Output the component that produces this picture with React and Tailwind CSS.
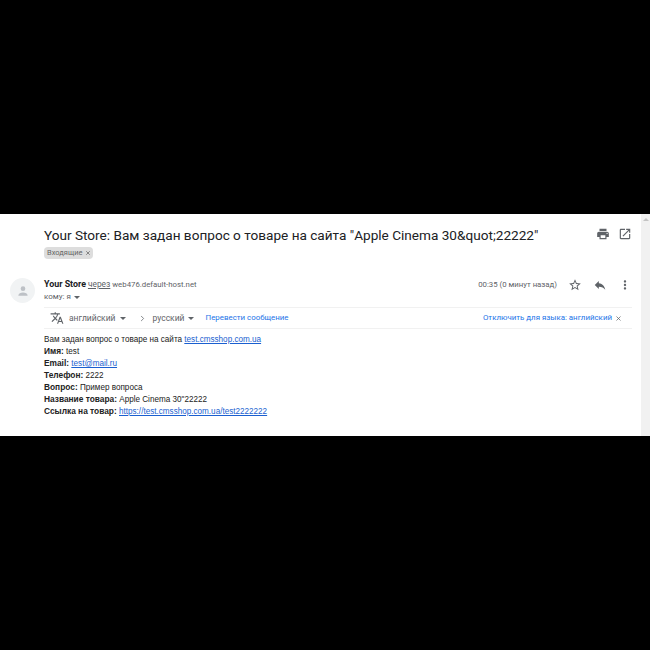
import { ChevronRight, X } from "lucide-react"

function Caret({ className = "" }) {
  return <span className={`inline-block w-0 h-0 border-x-[3px] border-x-transparent border-t-[3px] border-t-[#5f6368] ${className}`} />
}

function Icon({ d, size = "w-[14px] h-[14px]", className = "" }) {
  return (
    <svg viewBox="0 0 24 24" className={`${size} shrink-0 ${className}`} fill="#5f6368">
      <path d={d} />
    </svg>
  )
}

const printPath = "M19 8H5c-1.66 0-3 1.34-3 3v6h4v4h12v-4h4v-6c0-1.66-1.34-3-3-3zm-3 11H8v-5h8v5zm3-7c-.55 0-1-.45-1-1s.45-1 1-1 1 .45 1 1-.45 1-1 1zm-1-9H6v4h12V3z"
const popoutPath = "M19 19H5V5h7V3H5c-1.11 0-2 .9-2 2v14c0 1.1.89 2 2 2h14c1.1 0 2-.9 2-2v-7h-2v7zM14 3v2h3.59l-9.83 9.83 1.41 1.41L19 6.41V10h2V3h-7z"
const starPath = "M22 9.24l-7.19-.62L12 2 9.19 8.63 2 9.24l5.46 4.73L5.82 21 12 17.27 18.18 21l-1.63-7.03L22 9.24zM12 15.4l-3.76 2.27 1-4.28-3.32-2.88 4.38-.38L12 6.1l1.71 4.04 4.38.38-3.32 2.88 1 4.28L12 15.4z"
const replyPath = "M10 9V5l-7 7 7 7v-4.1c5 0 8.5 1.6 11 5.1-1-5-4-10-11-11z"
const morePath = "M12 8c1.1 0 2-.9 2-2s-.9-2-2-2-2 .9-2 2 .9 2 2 2zm0 2c-1.1 0-2 .9-2 2s.9 2 2 2 2-.9 2-2-.9-2-2-2zm0 6c-1.1 0-2 .9-2 2s.9 2 2 2 2-.9 2-2-.9-2-2-2z"
const translatePath = "M12.87 15.07l-2.54-2.51.03-.03c1.74-1.94 2.98-4.17 3.71-6.53H17V4h-7V2H8v2H1v1.99h11.17C11.5 7.92 10.44 9.75 9 11.35 8.07 10.32 7.3 9.19 6.69 8h-2c.73 1.63 1.73 3.17 2.98 4.56l-5.09 5.02L4 19l5-5 3.11 3.11.76-2.04zM18.5 10h-2L12 22h2l1.12-3h4.75L21 22h2l-4.5-12zm-2.62 7l1.62-4.33L19.12 17h-3.24z"

function Avatar() {
  return (
    <div className="w-[25px] h-[25px] rounded-full bg-[#f1f3f4] flex items-center justify-center shrink-0">
      <svg viewBox="0 0 24 24" className="w-[14px] h-[14px]" fill="#bdc1c6">
        <circle cx="12" cy="8" r="4" />
        <path d="M4 20c0-3.5 4-5.5 8-5.5s8 2 8 5.5z" />
      </svg>
    </div>
  )
}

function Link({ children }) {
  return <span className="text-[#1a5fd0] underline">{children}</span>
}

function Row({ label, children }) {
  return (
    <div className="h-[12px]">
      <b className="text-[8.35px]">{label}</b> {children}
    </div>
  )
}

export default function App() {
  return (
    <div className="h-[650px] bg-black pt-[214px] font-['Roboto',sans-serif]">
      <div className="h-[222px] bg-white flex">
        <div className="flex-1 min-w-0 pl-[10px] pr-[9px]">
          <div className="pl-[34px] pt-[11px] flex items-start justify-between">
            <div>
              <h1 className="text-[13.6px] leading-[20px] text-[#202124] whitespace-nowrap">
                Your Store: Вам задан вопрос о товаре на сайта "Apple Cinema 30&amp;quot;22222"
              </h1>
              <div className="mt-[2px] w-[49px] h-[12px] rounded-sm bg-[#dddddd] flex items-center pl-[3px] gap-[2px] text-[7.5px] text-[#666666]">
                Входящие
                <X className="w-[6px] h-[6px]" strokeWidth={3} />
              </div>
            </div>
            <div className="flex items-center gap-[8px] pt-[2px]">
              <Icon d={printPath} />
              <Icon d={popoutPath} />
            </div>
          </div>

          <div className="mt-[19px] flex items-start gap-[9px]">
            <Avatar />
            <div className="flex-1 min-w-0">
              <div className="flex items-start justify-between">
                <div>
                  <div className="h-[12px] text-[7.8px] leading-[12px] whitespace-nowrap">
                    <span className="font-bold text-[8.9px] text-[#202124]">Your Store</span>{" "}
                    <span className="text-[8.4px] text-[#5f6368] underline">через</span>{" "}
                    <span className="text-[#5f6368]">web476.default-host.net</span>
                  </div>
                  <div className="mt-[1px] flex items-center gap-[3px] text-[8px] leading-[12px] text-[#5f6368]">
                    кому: я
                    <Caret />
                  </div>
                </div>
                <div className="flex items-center">
                  <span className="text-[7.8px] text-[#5f6368] whitespace-nowrap">00:35 (0 минут назад)</span>
                  <Icon d={starPath} className="ml-[11px]" />
                  <Icon d={replyPath} className="ml-[11px]" />
                  <Icon d={morePath} className="ml-[11px]" />
                </div>
              </div>

              <div className="mt-[4px] h-[22px] border-y border-[#f1f1f1] flex items-center text-[8.5px] whitespace-nowrap">
                <Icon d={translatePath} className="ml-[6px]" />
                <span className="ml-[5px] text-[#5f6368]">английский</span>
                <Caret className="ml-[4px]" />
                <ChevronRight className="ml-[12px] w-[9px] h-[9px] text-[#5f6368]" />
                <span className="ml-[6px] text-[#5f6368]">русский</span>
                <Caret className="ml-[3px]" />
                <span className="ml-[12px] text-[7.9px] text-[#1a73e8]">Перевести сообщение</span>
                <span className="ml-auto text-[7.9px] text-[#1a73e8]">Отключить для языка: английский</span>
                <X className="ml-[3px] mr-[10px] w-[7px] h-[7px] text-[#5f6368]" strokeWidth={2.5} />
              </div>

              <div className="mt-[5px] text-[8.15px] leading-[12px] text-[#222222] font-['Liberation_Sans',sans-serif]">
                <div className="h-[11px]">Вам задан вопрос о товаре на сайта <Link>test.cmsshop.com.ua</Link></div>
                <Row label="Имя:">test</Row>
                <Row label="Email:"><Link>test@mail.ru</Link></Row>
                <Row label="Телефон:">2222</Row>
                <Row label="Вопрос:">Пример вопроса</Row>
                <Row label="Название товара:">Apple Cinema 30"22222</Row>
                <Row label="Ссылка на товар:"><Link>https://test.cmsshop.com.ua/test2222222</Link></Row>
              </div>
            </div>
          </div>
        </div>
        <div className="w-[9px] bg-[#f1f1f1] shrink-0 flex justify-center pt-[4px]">
          <span className="w-0 h-0 border-x-[3px] border-x-transparent border-b-[3px] border-b-[#c4c4c4]" />
        </div>
      </div>
    </div>
  )
}
